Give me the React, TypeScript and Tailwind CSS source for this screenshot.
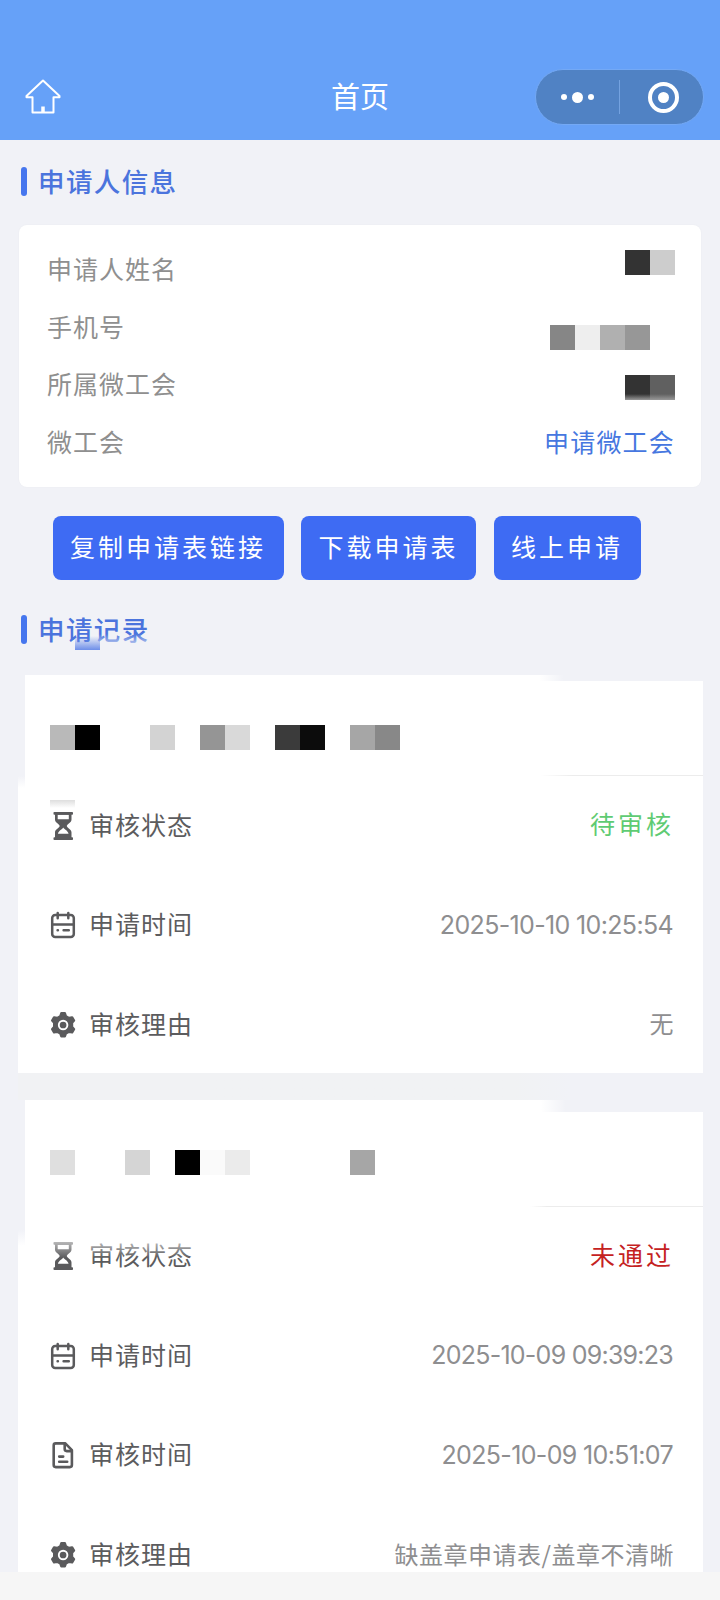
import React from "react";
import clsx from "clsx";

type Row = {
  icon: "hourglass" | "calendar" | "document" | "gear";
  label: string;
  value: string;
  valueClass: string;
};

const dateClass =
  "font-['Inter','Noto_Sans_CJK_SC',sans-serif] text-[25px] text-[#8e8e90] pr-px";
const reasonClass = "pb-[3px] text-[24px] tracking-[0.5px] text-[#8e8e90]";
const statusClass = "pb-[4px] text-[25px] tracking-[3px]";

const firstRows: Row[] = [
  {
    icon: "hourglass",
    label: "审核状态",
    value: "待审核",
    valueClass: clsx(statusClass, "text-[#5fcb73]"),
  },
  {
    icon: "calendar",
    label: "申请时间",
    value: "2025-10-10 10:25:54",
    valueClass: clsx(dateClass, "tracking-[-0.65px]"),
  },
  { icon: "gear", label: "审核理由", value: "无", valueClass: reasonClass },
];

const secondRows: Row[] = [
  {
    icon: "hourglass",
    label: "审核状态",
    value: "未通过",
    valueClass: clsx(statusClass, "text-[#c5221f]"),
  },
  {
    icon: "calendar",
    label: "申请时间",
    value: "2025-10-09 09:39:23",
    valueClass: clsx(dateClass, "tracking-[-0.75px]"),
  },
  {
    icon: "document",
    label: "审核时间",
    value: "2025-10-09 10:51:07",
    valueClass: clsx(dateClass, "tracking-[-0.65px]"),
  },
  {
    icon: "gear",
    label: "审核理由",
    value: "缺盖章申请表/盖章不清晰",
    valueClass: reasonClass,
  },
];

const firstBlocks = [
  "#b9b9b9",
  "#000000",
  "transparent",
  "transparent",
  "#d3d3d3",
  "transparent",
  "#959595",
  "#d9d9d9",
  "transparent",
  "#3b3b3b",
  "#0c0c0c",
  "transparent",
  "#a6a6a6",
  "#888888",
];

const secondBlocks = [
  "#dfdfdf",
  "transparent",
  "transparent",
  "#d5d5d5",
  "transparent",
  "#000000",
  "#fafafa",
  "#ebebeb",
  "transparent",
  "transparent",
  "transparent",
  "transparent",
  "#a6a6a6",
];

function Mosaic({ blocks, className }: { blocks: string[]; className?: string }) {
  return (
    <div className={clsx("flex", className)}>
      {blocks.map((color, i) => (
        <span
          key={i}
          className="block size-[25px]"
          style={{ background: color }}
        />
      ))}
    </div>
  );
}

function RowIcon({ name }: { name: Row["icon"] }) {
  switch (name) {
    case "hourglass":
      return (
        <svg viewBox="0 0 28 28" className="size-7" fill="#5a5a5c">
          <rect x="4.5" y="0" width="19.5" height="2.8" rx="0.8" />
          <rect x="4.5" y="25.2" width="19.5" height="2.8" rx="0.8" />
          <path
            fillRule="evenodd"
            d="M6 2h16.500v5.500c0 3.200-4.700 4.900-4.700 6.500s4.700 3.300 4.700 6.500V26H6v-5.500c0-3.200 4.700-4.900 4.700-6.500S6 10.700 6 7.500zM8.700 2.800v4.400h11.100V2.800zM14.250 15.600c-.9 1.800-4.600 3-5.300 6.200h10.600c-.7-3.200-4.400-4.400-5.300-6.200z"
          />
        </svg>
      );
    case "calendar":
      return (
        <svg
          viewBox="0 0 28 28"
          className="size-7"
          fill="none"
          stroke="#5a5a5c"
          strokeWidth="2.5"
          strokeLinecap="round"
        >
          <rect x="3.2" y="4" width="21.6" height="22" rx="3" />
          <path d="M3.600 13.600h21" />
          <path d="M8.700 2v5.200M19.300 2v5.200M14.600 19.300h5.200M8.600 19.300h.3" />
        </svg>
      );
    case "document":
      return (
        <svg
          viewBox="0 0 28 28"
          className="size-7"
          fill="none"
          stroke="#5a5a5c"
          strokeWidth="2.6"
          strokeLinecap="round"
          strokeLinejoin="round"
        >
          <path d="M6.700 2.400h9.600l6.600 6.800v14.900a2 2 0 0 1-2 2H6.700a2 2 0 0 1-2-2V4.400a2 2 0 0 1 2-2z" />
          <path d="M15.700 2.600v5.500a2 2 0 0 0 2 2h5M10.200 15.600h4M10.200 20.800h8" />
        </svg>
      );
    default:
      return (
        <svg viewBox="0 0 28 28" className="size-7">
          <path
            fill="#5a5a5c"
            stroke="#5a5a5c"
            strokeWidth="2.2"
            strokeLinejoin="round"
            d="M12.300 2.200h3.600l1 2.900 3.100 1.800 3.200-.6 1.900 3.300-2 2.300v3.900l2 2.300-1.900 3.300-3.200-.6-3.100 1.800-1 2.900h-3.600l-1-2.900-3.100-1.800-3.200.6-1.900-3.300 2-2.300v-3.900l-2-2.300L5 6.300l3.200.6 3.100-1.800z"
          />
          <circle
            cx="14.100"
            cy="14"
            r="4.300"
            fill="#5a5a5c"
            stroke="#fff"
            strokeWidth="1.900"
          />
        </svg>
      );
  }
}

function SectionTitle({ children }: { children: React.ReactNode }) {
  return (
    <div className="flex h-10 items-center pl-[21px]">
      <span className="h-[29px] w-1.5 rounded-full bg-[#4676ee]" />
      <h2 className="pb-px pl-[11px] text-[26.5px] leading-10 font-medium tracking-[1.4px] text-[#4b74dd]">
        {children}
      </h2>
    </div>
  );
}

function InfoRow({
  label,
  children,
}: {
  label: string;
  children: React.ReactNode;
}) {
  return (
    <div className="flex h-[57.8px] items-center justify-between">
      <span className="pb-[2px] text-[25px] tracking-[1px] text-[#8f8f8f]">
        {label}
      </span>
      {children}
    </div>
  );
}

function RecordRow({ row }: { row: Row }) {
  return (
    <div className="flex h-[99.6px] shrink-0 items-center justify-between pr-[29px] pl-[31px]">
      <div className="flex items-center gap-3">
        <RowIcon name={row.icon} />
        <span className="pb-[3px] text-[25px] tracking-[1px] text-[#5c5c5e]">
          {row.label}
        </span>
      </div>
      <span className={row.valueClass}>{row.value}</span>
    </div>
  );
}

export default function App() {
  return (
    <div className="flex h-[1600px] w-[720px] flex-col overflow-hidden bg-[#f1f2f7] font-['Noto_Sans_CJK_SC',sans-serif] leading-none">
      <header className="h-[140px] shrink-0 bg-[#66a1f8] pt-[69px]">
        <div className="grid h-14 grid-cols-3 items-center">
          <svg
            viewBox="0 0 36 36"
            className="ml-[25px] size-9"
            fill="none"
            stroke="#fff"
            strokeWidth="2"
            strokeLinejoin="round"
          >
            <path d="M18 1.500 1.500 17v1.300H7.500V33.500h21V18.300h6V17z" />
            <path d="M18 27.500v6" strokeWidth="3.500" />
          </svg>
          <h1 className="pb-[3px] text-center text-[29px] text-white">首页</h1>
          <div className="mr-4 flex h-14 w-[169px] items-center justify-self-end rounded-full border border-[#74a9f5] bg-[#5082c4]">
            <div className="flex w-[83px] items-center justify-center gap-[5px]">
              <span className="size-1.5 rounded-full bg-white" />
              <span className="size-[11px] rounded-full bg-white" />
              <span className="size-1.5 rounded-full bg-white" />
            </div>
            <span className="h-[34px] w-px bg-[#74a2e0]" />
            <div className="flex flex-1 justify-center pl-[4px]">
              <div className="flex size-[31px] items-center justify-center rounded-full border-4 border-white">
                <span className="size-[11px] rounded-full bg-white" />
              </div>
            </div>
          </div>
        </div>
      </header>

      <main className="flex h-[1432px] shrink-0 flex-col overflow-hidden">
        <div className="pt-[21.5px]">
          <SectionTitle>申请人信息</SectionTitle>
        </div>

        <section className="mx-[19px] mt-[23.5px] h-[262px] shrink-0 rounded-lg bg-white pt-[15.5px] pr-[26px] pl-7 shadow-[0_0_2px_rgba(0,0,0,0.04)]">
          <InfoRow label="申请人姓名">
            <Mosaic className="mb-3.5" blocks={["#333333", "#cdcdcd"]} />
          </InfoRow>
          <InfoRow label="手机号">
            <Mosaic
              className="mt-5 mr-[25px]"
              blocks={["#868686", "#eeeeee", "#b0b0b0", "#979797"]}
            />
          </InfoRow>
          <InfoRow label="所属微工会">
            <div className="relative mt-1.5">
              <Mosaic blocks={["#333333", "#606060"]} />
              <span className="absolute inset-x-0 bottom-0 h-1.5 bg-linear-to-b from-transparent to-[#999]" />
            </div>
          </InfoRow>
          <InfoRow label="微工会">
            <a className="pb-[2px] text-[25px] tracking-[1.2px] text-[#4677e0]">
              申请微工会
            </a>
          </InfoRow>
        </section>

        <div className="mt-[29px] ml-[52.5px] flex shrink-0 gap-[17.5px]">
          {["复制申请表链接", "下载申请表", "线上申请"].map((text) => (
            <button
              key={text}
              className="h-[63.5px] rounded-lg bg-[#3e6bf3] px-[17.5px] pb-[2px] text-[25px] tracking-[3px] text-white"
            >
              {text}
            </button>
          ))}
        </div>

        <div className="relative mt-[30px] shrink-0">
          <SectionTitle>申请记录</SectionTitle>
          <span className="absolute top-6 left-[95px] h-4 w-[57px] bg-linear-to-b from-transparent to-[#f1f2f7]" />
          <span className="absolute top-[26px] left-[75px] h-[14px] w-[25px] bg-linear-to-b from-transparent to-[#6d8ee9]" />
        </div>

        <section className="relative mt-[25.5px] mr-[17px] ml-[18px] flex h-[398px] shrink-0 flex-col">
          <div className="flex h-[101px] shrink-0 items-end pl-[7px]">
            <div className="h-full w-[515px] bg-white pt-[50px] pl-[25px]">
              <Mosaic blocks={firstBlocks} />
            </div>
            <div className="flex h-[95px] flex-1 flex-col justify-end bg-white">
              <span className="h-px bg-linear-to-r from-white to-[#ececec] to-20%" />
            </div>
          </div>
          <span className="absolute top-0 left-[522px] h-1.5 w-6 bg-linear-to-r from-white to-transparent" />
          <div className="flex flex-1 flex-col overflow-hidden bg-white">
            {firstRows.map((row) => (
              <RecordRow key={row.label} row={row} />
            ))}
          </div>
          <span className="absolute top-[101px] left-0 h-3 w-[7px] bg-linear-to-b from-[#f1f2f7] to-white" />
          <span className="absolute top-[125px] left-8 h-2 w-[25px] bg-linear-to-b from-[#dedede] to-white" />
        </section>

        <div className="mr-[150px] ml-[18px] h-[27px] shrink-0 bg-linear-to-r from-[#f1f2f4] from-90% to-[#f1f2f7]" />

        <section className="relative mr-[17px] ml-[18px] flex h-[472px] shrink-0 flex-col">
          <div className="flex h-[106.5px] shrink-0 items-end pl-[7px]">
            <div className="h-full w-[505px] bg-white pt-[50px] pl-[25px]">
              <Mosaic blocks={secondBlocks} />
            </div>
            <div className="flex h-[95px] flex-1 flex-col justify-end bg-white">
              <span className="h-px bg-linear-to-r from-white to-[#ececec] to-10%" />
            </div>
          </div>
          <span className="absolute top-0 left-[512px] h-3 w-9 bg-linear-to-r from-white from-30% to-transparent" />
          <div className="flex flex-1 flex-col overflow-hidden bg-white">
            {secondRows.map((row) => (
              <RecordRow key={row.label} row={row} />
            ))}
          </div>
          <span className="absolute top-[138px] left-8 h-5 w-[150px] bg-linear-to-b from-white/70 to-transparent" />
          <span className="absolute top-[106px] left-0 h-6 w-[7px] bg-[#f1f2f7]" />
          <span className="absolute top-[130px] left-0 h-4 w-[7px] bg-linear-to-b from-[#f1f2f7] to-white" />
        </section>
      </main>

      <footer className="flex-1 bg-[#f6f6f6]" />
    </div>
  );
}
